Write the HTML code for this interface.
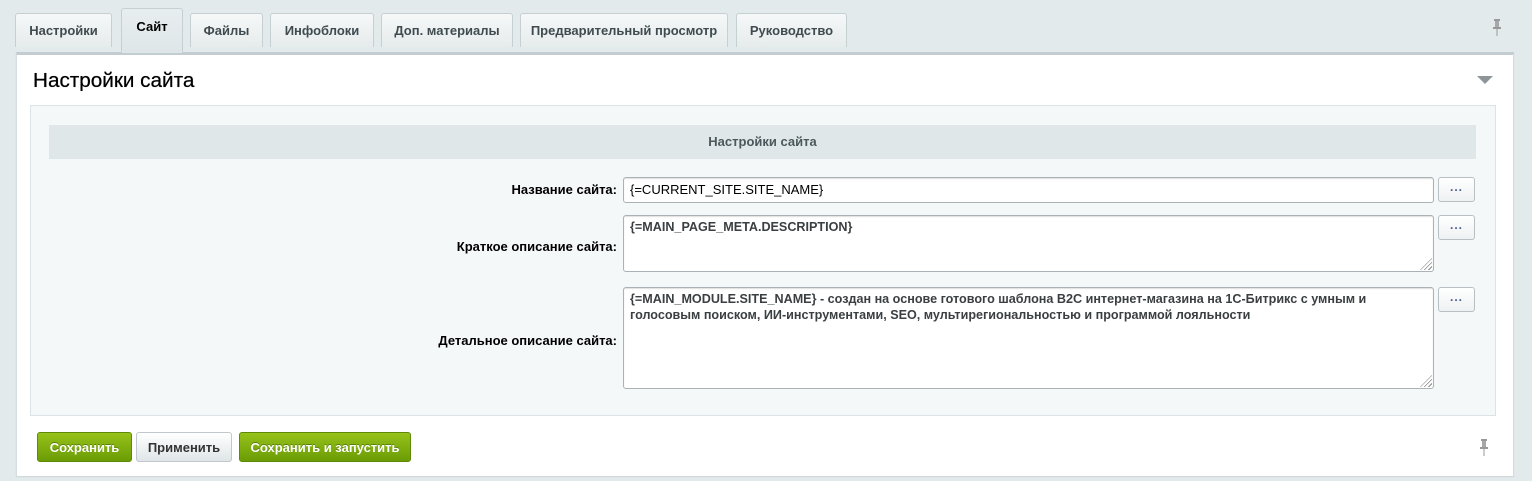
<!DOCTYPE html>
<html><head><meta charset="utf-8"><style>
*{box-sizing:border-box}
body{margin:0;width:1532px;height:481px;background:#e3eaec;font-family:"Liberation Sans",Arial,sans-serif;position:relative;overflow:hidden}
.tab{position:absolute;top:13px;height:34px;background:linear-gradient(#f6f8f8,#e6ebec);border:1px solid #c6cfd2;border-bottom:none;border-radius:3px 3px 0 0;font-size:13px;font-weight:bold;color:#3f4b4f;text-align:center;line-height:34px}
.tab.act{top:8px;height:45px;background:linear-gradient(#e8eef0,#dfe6e8);color:#000;line-height:36px;z-index:2}
.panel{position:absolute;left:16px;top:52px;width:1498px;height:424px;background:#fff;border-top:3px solid #c3ccd0;box-shadow:0 1px 1px #cdd5d8;border-left:1px solid #d5dde0;border-right:1px solid #d5dde0}
h1{position:absolute;left:16px;top:14px;margin:0;font-size:20.7px;font-weight:normal;color:#000;text-shadow:0 0 0.5px #000}
.inner{position:absolute;left:13px;top:50px;width:1466px;height:311px;background:#f5f8f9;border:1px solid #dbe3e6}
.hdr{position:absolute;left:18px;top:19px;width:1427px;height:34px;background:#e0e7e9;text-align:center;font-size:13px;font-weight:bold;color:#4b585c;line-height:34px}
.lbl{position:absolute;right:878px;font-size:13px;font-weight:bold;color:#000;text-align:right}
.in{position:absolute;left:592px;width:811px;background:#fff;border:1px solid #aab2b6;border-radius:3px;font-size:13px;color:#000;padding:3px 6px;box-shadow:inset 0 1px 1px #e0e0e0}
.ta{font-weight:bold;color:#3a3f42;font-size:12.6px;line-height:16px}
.dots{position:absolute;left:1407px;width:37px;height:25px;border:1px solid #b8c0c4;border-radius:3px;background:linear-gradient(#fff,#eef1f2);text-align:center;font-size:12px;color:#4a5a8a;line-height:18px;font-weight:bold;letter-spacing:1px}
.grip{position:absolute;right:1px;bottom:1px;width:12px;height:12px;background:repeating-linear-gradient(135deg,transparent 0 2px,#888 2px 3px);clip-path:polygon(100% 0,100% 100%,0 100%)}
.btn{position:absolute;top:377px;height:30px;border-radius:3px;font-size:13px;font-weight:bold;text-align:center;line-height:29px}
.g{background:linear-gradient(#97c21a,#6a9c05);color:#fff;border:1px solid #5e8a08;text-shadow:0 -1px 0 #5a7e0a}
.w{background:linear-gradient(#fff,#dfe5e8);color:#333;border:1px solid #c0c8cc}
</style></head><body>
<div class="tab" style="left:15px;width:97px">Настройки</div>
<div class="tab act" style="left:121px;width:62px">Сайт</div>
<div class="tab" style="left:190px;width:73px">Файлы</div>
<div class="tab" style="left:270px;width:104px">Инфоблоки</div>
<div class="tab" style="left:381px;width:132px">Доп. материалы</div>
<div class="tab" style="left:520px;width:208px">Предварительный просмотр</div>
<div class="tab" style="left:736px;width:111px">Руководство</div>
<svg style="position:absolute;left:1492px;top:19px" width="10" height="17"><rect x="2" y="0" width="6" height="2" fill="#999"/><rect x="3" y="2" width="4" height="6" fill="#a7a7a7"/><rect x="1" y="8" width="8" height="2" fill="#999"/><rect x="4.5" y="10" width="1" height="7" fill="#999"/></svg>
<div class="panel">
<h1>Настройки сайта</h1>
<svg style="position:absolute;left:1460px;top:21px" width="16" height="9"><polygon points="0,0 16,0 8,8" fill="#8d9598"/></svg>
<div class="inner">
<div class="hdr">Настройки сайта</div>
<div class="lbl" style="top:76px">Название сайта:</div>
<div class="in" style="top:71px;height:26px;padding-top:4px">{=CURRENT_SITE.SITE_NAME}</div>
<div class="dots" style="top:71px">...</div>
<div class="lbl" style="top:133px">Краткое описание сайта:</div>
<div class="in ta" style="top:109px;height:57px">{=MAIN_PAGE_META.DESCRIPTION}<div class="grip"></div></div>
<div class="dots" style="top:109px">...</div>
<div class="lbl" style="top:227px">Детальное описание сайта:</div>
<div class="in ta" style="top:181px;height:102px">{=MAIN_MODULE.SITE_NAME} - создан на основе готового шаблона B2C интернет-магазина на 1С-Битрикс с умным и<br>голосовым поиском, ИИ-инструментами, SEO, мультирегиональностью и программой лояльности<div class="grip"></div></div>
<div class="dots" style="top:181px">...</div>
</div>
<div class="btn g" style="left:20px;width:95px">Сохранить</div>
<div class="btn w" style="left:119px;width:96px">Применить</div>
<div class="btn g" style="left:222px;width:172px">Сохранить и запустить</div>
<svg style="position:absolute;left:1462px;top:384px" width="10" height="17"><rect x="2" y="0" width="6" height="2" fill="#999"/><rect x="3" y="2" width="4" height="6" fill="#a7a7a7"/><rect x="1" y="8" width="8" height="2" fill="#999"/><rect x="4.5" y="10" width="1" height="7" fill="#999"/></svg>
</div>
</body></html>
